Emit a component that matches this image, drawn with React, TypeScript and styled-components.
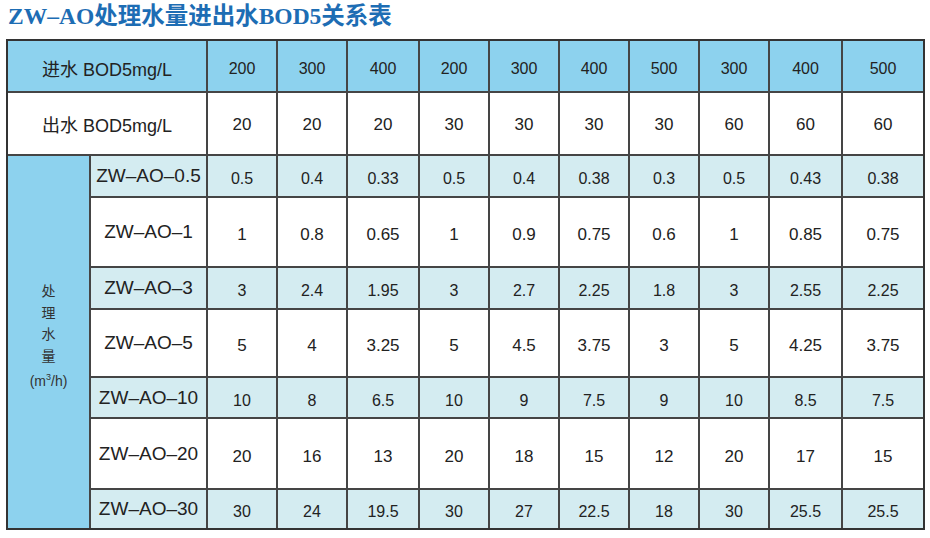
import React from "react";
import styled, { createGlobalStyle } from "styled-components";

const Global = createGlobalStyle`
  html, body { margin: 0; padding: 0; background: #ffffff; }
  body { font-family: "Liberation Sans", Arial, "Noto Sans CJK SC", sans-serif; color: #222; }
`;

const Page = styled.div`
  width: 930px;
  height: 538px;
  padding: 0 0 0 6px;
  box-sizing: border-box;
`;

const Title = styled.h1`
  margin: 0;
  padding: 3px 0 0 2px;
  height: 39px;
  box-sizing: border-box;
  font-family: "Liberation Serif", "Noto Sans CJK SC", serif;
  font-weight: 700;
  font-size: 23.5px;
  line-height: 27px;
  color: #1d6db4;
`;

const Grid = styled.div`
  display: grid;
  width: 919px;
  box-sizing: border-box;
  border: 2px solid #333;
  background: #454545;
  gap: 2px;
  grid-template-columns: 81px 115px 68px 68px 70px 68px 68px 68px 68px 68px 71px 80px;
  grid-template-rows: 50px 61px 40px 68px 40px 66px 39px 69px 38px;
`;

type Tone = "head" | "white" | "light";
const bg: Record<Tone, string> = {
  head: "#8dd2ee",
  white: "#ffffff",
  light: "#d4ecf1",
};

const Cell = styled.div<{ $tone: Tone; $size?: number; $drop?: number }>`
  background: ${(p) => bg[p.$tone]};
  display: flex;
  align-items: center;
  justify-content: center;
  box-sizing: border-box;
  padding-top: ${(p) => p.$drop ?? 0}px;
  font-size: ${(p) => p.$size ?? 16}px;
  color: #222;
  white-space: nowrap;
`;

const HeadLabel = styled(Cell)`
  grid-column: 1 / span 2;
  font-size: 18px;
`;

const SideCell = styled.div`
  grid-column: 1;
  grid-row: 3 / span 7;
  background: #8dd2ee;
  display: flex;
  flex-direction: column;
  align-items: center;
  justify-content: center;
  padding-bottom: 10px;
  font-size: 14px;
  line-height: 21.5px;
  color: #333;
`;

const Sup = styled.sup`
  font-size: 9px;
  vertical-align: 6px;
`;

const Model = styled(Cell)`
  font-size: 19px;
  color: #222;
`;

const inWater = ["200", "300", "400", "200", "300", "400", "500", "300", "400", "500"];
const outWater = ["20", "20", "20", "30", "30", "30", "30", "60", "60", "60"];

const rows: { name: string; vals: string[]; tone: Tone }[] = [
  { name: "ZW–AO–0.5", vals: ["0.5", "0.4", "0.33", "0.5", "0.4", "0.38", "0.3", "0.5", "0.43", "0.38"], tone: "light" },
  { name: "ZW–AO–1", vals: ["1", "0.8", "0.65", "1", "0.9", "0.75", "0.6", "1", "0.85", "0.75"], tone: "white" },
  { name: "ZW–AO–3", vals: ["3", "2.4", "1.95", "3", "2.7", "2.25", "1.8", "3", "2.55", "2.25"], tone: "light" },
  { name: "ZW–AO–5", vals: ["5", "4", "3.25", "5", "4.5", "3.75", "3", "5", "4.25", "3.75"], tone: "white" },
  { name: "ZW–AO–10", vals: ["10", "8", "6.5", "10", "9", "7.5", "9", "10", "8.5", "7.5"], tone: "light" },
  { name: "ZW–AO–20", vals: ["20", "16", "13", "20", "18", "15", "12", "20", "17", "15"], tone: "white" },
  { name: "ZW–AO–30", vals: ["30", "24", "19.5", "30", "27", "22.5", "18", "30", "25.5", "25.5"], tone: "light" },
];

export default function App() {
  return (
    <Page>
      <Global />
      <Title>ZW–AO处理水量进出水BOD5关系表</Title>
      <Grid>
        <HeadLabel $tone="head" $drop={4}>进水 BOD5mg/L</HeadLabel>
        {inWater.map((v, i) => (
          <Cell key={"in" + i} $tone="head" $size={16} $drop={5}>{v}</Cell>
        ))}
        <HeadLabel $tone="white" $drop={1}>出水 BOD5mg/L</HeadLabel>
        {outWater.map((v, i) => (
          <Cell key={"out" + i} $tone="white" $size={17} $drop={2}>{v}</Cell>
        ))}
        <SideCell>
          <span>处</span>
          <span>理</span>
          <span>水</span>
          <span>量</span>
          <span>
            (m<Sup>3</Sup>/h)
          </span>
        </SideCell>
        {rows.map((r) => (
          <React.Fragment key={r.name}>
            <Model $tone={r.tone}>{r.name}</Model>
            {r.vals.map((v, i) => (
              <Cell key={r.name + i} $tone={r.tone} $size={r.tone === "white" ? 17 : 16} $drop={6}>
                {v}
              </Cell>
            ))}
          </React.Fragment>
        ))}
      </Grid>
    </Page>
  );
}
